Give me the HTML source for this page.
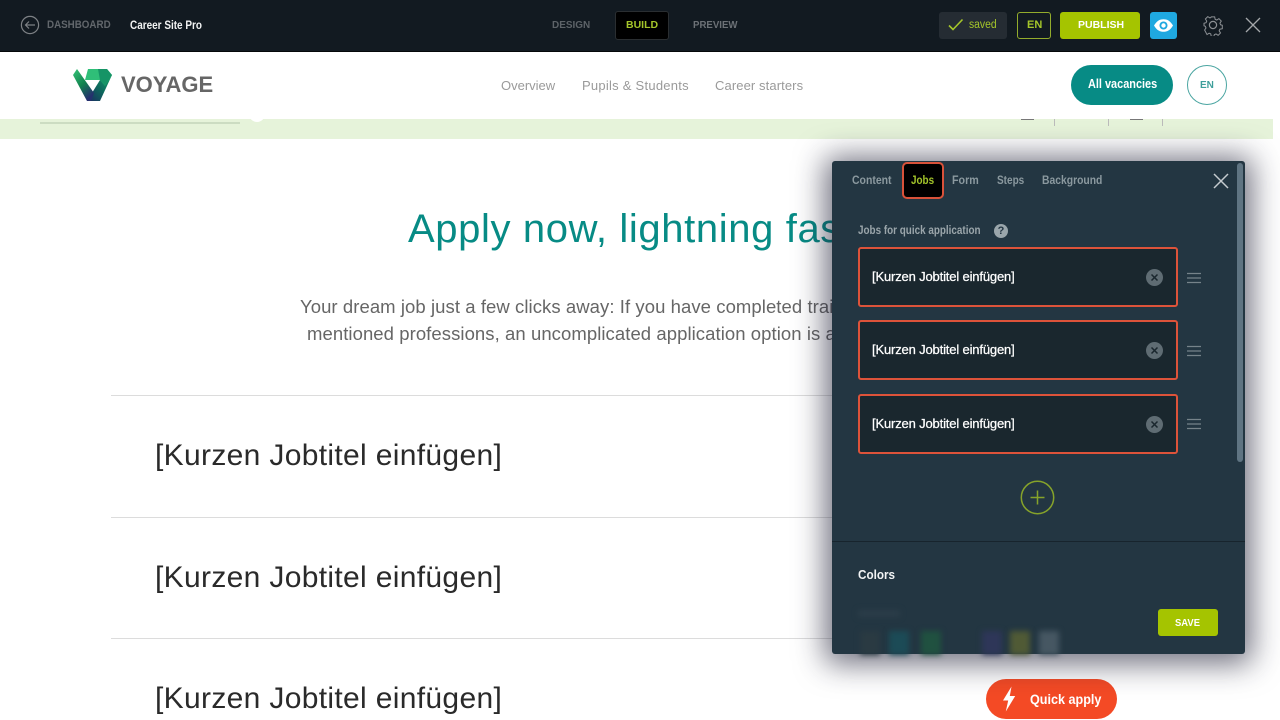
<!DOCTYPE html>
<html lang="en"><head><meta charset="utf-8"><title>Career Site Pro</title>
<style>
html,body{margin:0;padding:0;width:1280px;height:720px;overflow:hidden;background:#fff}
body{font-family:"Liberation Sans",sans-serif;position:relative}
#w{position:absolute;left:0;top:0;width:1280px;height:720px;overflow:hidden;filter:blur(.3px)}
.a,.a *{box-sizing:border-box}
.a{position:absolute;white-space:nowrap}
.b{font-weight:700}
.s{transform-origin:0 50%}
.jobt{left:155px;font-size:30px;color:#2a2a2a;letter-spacing:.33px;line-height:36px}
.hr{left:111px;width:760px;height:1px;background:#dcdcdc}
.inp{left:858px;width:320px;height:60px;background:#1a272e;border:2px solid #dd533a;border-radius:3px}
.inpt{left:872px;font-size:13px;color:#fff;font-weight:400;line-height:16px;-webkit-text-stroke:.25px #fff;letter-spacing:-.16px}
.sw{top:631px;height:24px;filter:blur(3px)}
</style></head><body><div id="w">
<!-- page -->
<div class="a" style="left:0;top:119px;width:1273px;height:20px;background:#e6f3da"></div>
<div class="a" style="left:40px;top:122px;width:200px;height:2px;background:#ccdcc2"></div>
<div class="a" style="left:249px;top:112px;width:16px;height:10px;background:#fff;border-radius:0 0 8px 8px"></div>
<div class="a" style="left:1021px;top:118px;width:13px;height:2px;background:#777"></div>
<div class="a" style="left:1054px;top:119px;width:1px;height:7px;background:#bbb"></div>
<div class="a" style="left:1108px;top:119px;width:1px;height:7px;background:#bbb"></div>
<div class="a" style="left:1162px;top:119px;width:1px;height:7px;background:#bbb"></div>
<div class="a" style="left:1130px;top:118px;width:13px;height:2px;background:#777"></div>

<div class="a" style="left:408px;top:205px;font-size:40px;line-height:48px;color:#078b85;letter-spacing:.62px">Apply now, lightning fast</div>
<div class="a" style="left:300px;top:294px;font-size:18.5px;line-height:26px;color:#666;letter-spacing:.07px">Your dream job just a few clicks away: If you have completed training</div>
<div class="a" style="left:307px;top:321px;font-size:18.5px;line-height:26px;color:#666;letter-spacing:.07px">mentioned professions, an uncomplicated application option is available</div>
<div class="a hr" style="top:395px"></div>
<div class="a hr" style="top:517px"></div>
<div class="a hr" style="top:638px"></div>
<div class="a jobt" style="top:438px">[Kurzen Jobtitel einfügen]</div>
<div class="a jobt" style="top:560px">[Kurzen Jobtitel einfügen]</div>
<div class="a jobt" style="top:681px">[Kurzen Jobtitel einfügen]</div>

<div class="a" style="left:986px;top:679px;width:131px;height:40px;border-radius:20px;background:#f44a25"></div>
<svg class="a" style="left:1001px;top:686px" width="16" height="26" viewBox="0 0 16 26"><path d="M10.5 0.5 L2 14.5 H7.2 L4.8 25.5 L14.2 10 H8.8 Z" fill="#fff"/></svg>
<div class="a b s" style="left:1030px;top:691px;font-size:14px;line-height:17px;color:#fff;transform:scaleX(.9)">Quick apply</div>

<!-- site header -->
<div class="a" style="left:0;top:52px;width:1280px;height:67px;background:#fff"></div>
<svg class="a" style="left:73px;top:68px" width="40" height="34" viewBox="0 0 40 34">
<defs><linearGradient id="g1" x1="0" y1="0" x2=".6" y2="1"><stop offset="0" stop-color="#35c477"/><stop offset=".55" stop-color="#12824f"/><stop offset="1" stop-color="#25306e"/></linearGradient>
<linearGradient id="g2" x1="1" y1="0" x2="0" y2="1"><stop offset="0" stop-color="#12a069"/><stop offset=".5" stop-color="#0d6a5c"/><stop offset="1" stop-color="#1c2a63"/></linearGradient></defs>
<path d="M27 12 L39 7 L27 33 H14 Z" fill="url(#g2)"/>
<path d="M0 7 L4 1 L21 25 L18 33 H14 Z" fill="url(#g1)"/>
<path d="M15 1 H34 L39 7 L32 18 L27 12 H12 Z" fill="#2fbf78"/>
<path d="M25 1 H34 L39 7 L32 18 L27 12 Z" fill="#169466"/>
</svg>
<div class="a b" style="left:121px;top:71px;font-size:22px;line-height:28px;color:#666;font-weight:700">VOYAGE</div>
<div class="a" style="left:501px;top:77px;font-size:13px;line-height:17px;color:#9a9a9a">Overview</div>
<div class="a" style="left:582px;top:77px;font-size:13px;line-height:17px;color:#9a9a9a;letter-spacing:.25px">Pupils &amp; Students</div>
<div class="a" style="left:715px;top:77px;font-size:13px;line-height:17px;color:#9a9a9a;letter-spacing:.1px">Career starters</div>
<div class="a" style="left:1071px;top:65px;width:102px;height:40px;border-radius:20px;background:#078b85"></div>
<div class="a b s" style="left:1088px;top:76px;font-size:13px;line-height:16px;color:#fff;transform:scaleX(.84)">All vacancies</div>
<div class="a" style="left:1187px;top:65px;width:40px;height:40px;border-radius:50%;border:1.5px solid #4aa5a1"></div>
<div class="a b" style="left:1200px;top:79px;font-size:10px;line-height:13px;color:#3d9e9a">EN</div>

<!-- top bar -->
<div class="a" style="left:0;top:0;width:1280px;height:52px;background:#121a21;border-bottom:1px solid #05080a"></div>
<svg class="a" style="left:20px;top:15px" width="20" height="20" viewBox="0 0 20 20" fill="none" stroke="#7d8185" stroke-width="1.2"><circle cx="10" cy="10" r="8.6"/><path d="M15 10H5.5M9 6.5 5.5 10 9 13.5"/></svg>
<div class="a b s" style="left:47px;top:18px;font-size:11px;line-height:14px;color:#62676c;transform:scaleX(.89)">DASHBOARD</div>
<div class="a b s" style="left:130px;top:18px;font-size:12px;line-height:14px;color:#f2f3f3;transform:scaleX(.83)">Career Site Pro</div>
<div class="a b s" style="left:552px;top:18px;font-size:10.5px;line-height:14px;color:#5d6368;transform:scaleX(.95)">DESIGN</div>
<div class="a" style="left:615px;top:11px;width:54px;height:29px;background:#000;border:1px solid #2a2e31;border-radius:3px"></div>
<div class="a b" style="left:626px;top:18px;font-size:10.5px;line-height:14px;color:#a4c52a">BUILD</div>
<div class="a b s" style="left:693px;top:18px;font-size:10.5px;line-height:14px;color:#6c7176;transform:scaleX(.92)">PREVIEW</div>

<div class="a" style="left:939px;top:12px;width:68px;height:27px;background:#252c33;border-radius:3px"></div>
<svg class="a" style="left:948px;top:18px" width="16" height="14" viewBox="0 0 16 14" fill="none" stroke="#a5c62a" stroke-width="1.6"><path d="M1 7.5 5 11.5 14.5 1.5"/></svg>
<div class="a s" style="left:969px;top:18px;font-size:11.5px;line-height:14px;color:#a5c62a;transform:scaleX(.9)">saved</div>
<div class="a" style="left:1017px;top:12px;width:34px;height:27px;border:1.5px solid #93ac2c;border-radius:3px"></div>
<div class="a b" style="left:1027px;top:18px;font-size:11px;line-height:14px;color:#a5c62a">EN</div>
<div class="a" style="left:1060px;top:12px;width:80px;height:27px;background:#a5c400;border-radius:3px"></div>
<div class="a b" style="left:1078px;top:18px;font-size:10.5px;line-height:14px;color:#fff">PUBLISH</div>
<div class="a" style="left:1150px;top:12px;width:27px;height:27px;background:#1fa8e0;border-radius:3px"></div>
<svg class="a" style="left:1153px;top:18px" width="21" height="15" viewBox="0 0 21 15"><path d="M1 7.5C4 2.5 7 1.2 10.5 1.2S17 2.5 20 7.5C17 12.5 14 13.8 10.5 13.8S4 12.5 1 7.5Z" fill="#fff"/><circle cx="10.5" cy="7.5" r="4" fill="#1fa8e0"/><circle cx="10.5" cy="7.5" r="2.2" fill="#fff"/></svg>
<svg class="a" style="left:1202px;top:14px" width="22" height="22" viewBox="0 0 22 22" fill="none" stroke="#8b8f93" stroke-width="1.2"><path d="M9 1.5h4l.6 2.9 1.9.8 2.5-1.6 2.8 2.8-1.6 2.5.8 1.9 2 .6v4l-2.9.6-.8 1.9 1.6 2.5-2.8 2.8-2.5-1.6-1.9.8-.6 2H9l-.6-2.9-1.9-.8-2.5 1.6L1.2 17l1.6-2.5-.8-1.9-1.5-.6V9l2.4-.6.8-1.9L2.1 4l2.8-2.8L7.4 2.8l1-.4Z" transform="translate(1.6 1.6) scale(.85)"/><circle cx="11" cy="11" r="3.6"/></svg>
<svg class="a" style="left:1245px;top:17px" width="16" height="16" viewBox="0 0 16 16" stroke="#a4a7aa" stroke-width="1.3"><path d="M1 1 15 15M15 1 1 15"/></svg>

<!-- panel -->
<div class="a" style="left:832px;top:161px;width:413px;height:493px;background:#233642;border-radius:3px;box-shadow:0 3px 30px 7px rgba(28,28,50,.62)"></div>
<div class="a" style="left:1237px;top:163px;width:6px;height:299px;background:#5f7482;border-radius:3px"></div>
<div class="a" style="left:832px;top:541px;width:413px;height:1px;background:#17242d"></div>
<div class="a" style="left:858px;top:610px;width:42px;height:7px;background:#2b3d49;filter:blur(3px)"></div>
<div class="a sw" style="left:860px;width:20px;background:#2a3a42"></div>
<div class="a sw" style="left:889px;width:20px;background:#1c4b56"></div>
<div class="a sw" style="left:921px;width:20px;background:#205140"></div>
<div class="a sw" style="left:982px;width:20px;background:#2e3658"></div>
<div class="a sw" style="left:1010px;width:20px;background:#505a35"></div>
<div class="a sw" style="left:1039px;width:20px;background:#465762"></div>

<div class="a b s" style="left:852px;top:174px;font-size:11.5px;line-height:14px;color:#8b999f;transform:scaleX(.91)">Content</div>
<div class="a" style="left:902px;top:162px;width:42px;height:37px;background:#000;border:2px solid #d9523a;border-radius:5px"></div>
<div class="a b s" style="left:911px;top:174px;font-size:11.5px;line-height:14px;color:#a4c52a;transform:scaleX(.86)">Jobs</div>
<div class="a b s" style="left:952px;top:174px;font-size:11.5px;line-height:14px;color:#8b999f;transform:scaleX(.93)">Form</div>
<div class="a b s" style="left:997px;top:174px;font-size:11.5px;line-height:14px;color:#8b999f;transform:scaleX(.87)">Steps</div>
<div class="a b s" style="left:1042px;top:174px;font-size:11.5px;line-height:14px;color:#8b999f;transform:scaleX(.9)">Background</div>
<svg class="a" style="left:1213px;top:173px" width="16" height="16" viewBox="0 0 16 16" stroke="#c5cbcf" stroke-width="1.5"><path d="M1 1 15 15M15 1 1 15"/></svg>
<div class="a b s" style="left:858px;top:224px;font-size:11.5px;line-height:14px;color:#9ba6ab;transform:scaleX(.86)">Jobs for quick application</div>
<div class="a b" style="left:994px;top:224px;width:14px;height:14px;border-radius:50%;background:#9aa6ab;color:#243643;font-size:11px;line-height:14px;text-align:center">?</div>

<div class="a inp" style="top:247px"></div>
<div class="a inp" style="top:320px"></div>
<div class="a inp" style="top:394px"></div>
<div class="a inpt" style="top:269px">[Kurzen Jobtitel einfügen]</div>
<div class="a inpt" style="top:342px">[Kurzen Jobtitel einfügen]</div>
<div class="a inpt" style="top:416px">[Kurzen Jobtitel einfügen]</div>

<svg class="a" style="left:1146px;top:269px" width="17" height="17" viewBox="0 0 17 17"><circle cx="8.5" cy="8.5" r="8.5" fill="#5f6c73"/><path d="M5.5 5.5 11.5 11.5M11.5 5.5 5.5 11.5" stroke="#1a272e" stroke-width="1.5"/></svg>
<svg class="a" style="left:1146px;top:342px" width="17" height="17" viewBox="0 0 17 17"><circle cx="8.5" cy="8.5" r="8.5" fill="#5f6c73"/><path d="M5.5 5.5 11.5 11.5M11.5 5.5 5.5 11.5" stroke="#1a272e" stroke-width="1.5"/></svg>
<svg class="a" style="left:1146px;top:416px" width="17" height="17" viewBox="0 0 17 17"><circle cx="8.5" cy="8.5" r="8.5" fill="#5f6c73"/><path d="M5.5 5.5 11.5 11.5M11.5 5.5 5.5 11.5" stroke="#1a272e" stroke-width="1.5"/></svg>

<svg class="a" style="left:1187px;top:272px" width="14" height="12" viewBox="0 0 14 12" stroke="#76838a" stroke-width="1.3"><path d="M0 1.5H14M0 6H14M0 10.5H14"/></svg>
<svg class="a" style="left:1187px;top:345px" width="14" height="12" viewBox="0 0 14 12" stroke="#76838a" stroke-width="1.3"><path d="M0 1.5H14M0 6H14M0 10.5H14"/></svg>
<svg class="a" style="left:1187px;top:418px" width="14" height="12" viewBox="0 0 14 12" stroke="#76838a" stroke-width="1.3"><path d="M0 1.5H14M0 6H14M0 10.5H14"/></svg>

<svg class="a" style="left:1020px;top:480px" width="35" height="35" viewBox="0 0 35 35" fill="none" stroke="#86a32a" stroke-width="1.5"><circle cx="17.5" cy="17.5" r="16.2"/><path d="M17.5 10.5V24.5M10.5 17.5H24.5"/></svg>
<div class="a b s" style="left:858px;top:567px;font-size:13px;line-height:16px;color:#f2f4f5;transform:scaleX(.9)">Colors</div>
<div class="a" style="left:1158px;top:609px;width:60px;height:27px;background:#a5c400;border-radius:3px"></div>
<div class="a b s" style="left:1175px;top:616px;font-size:10.5px;line-height:14px;color:#fff;transform:scaleX(.9)">SAVE</div>
</div></body></html>
